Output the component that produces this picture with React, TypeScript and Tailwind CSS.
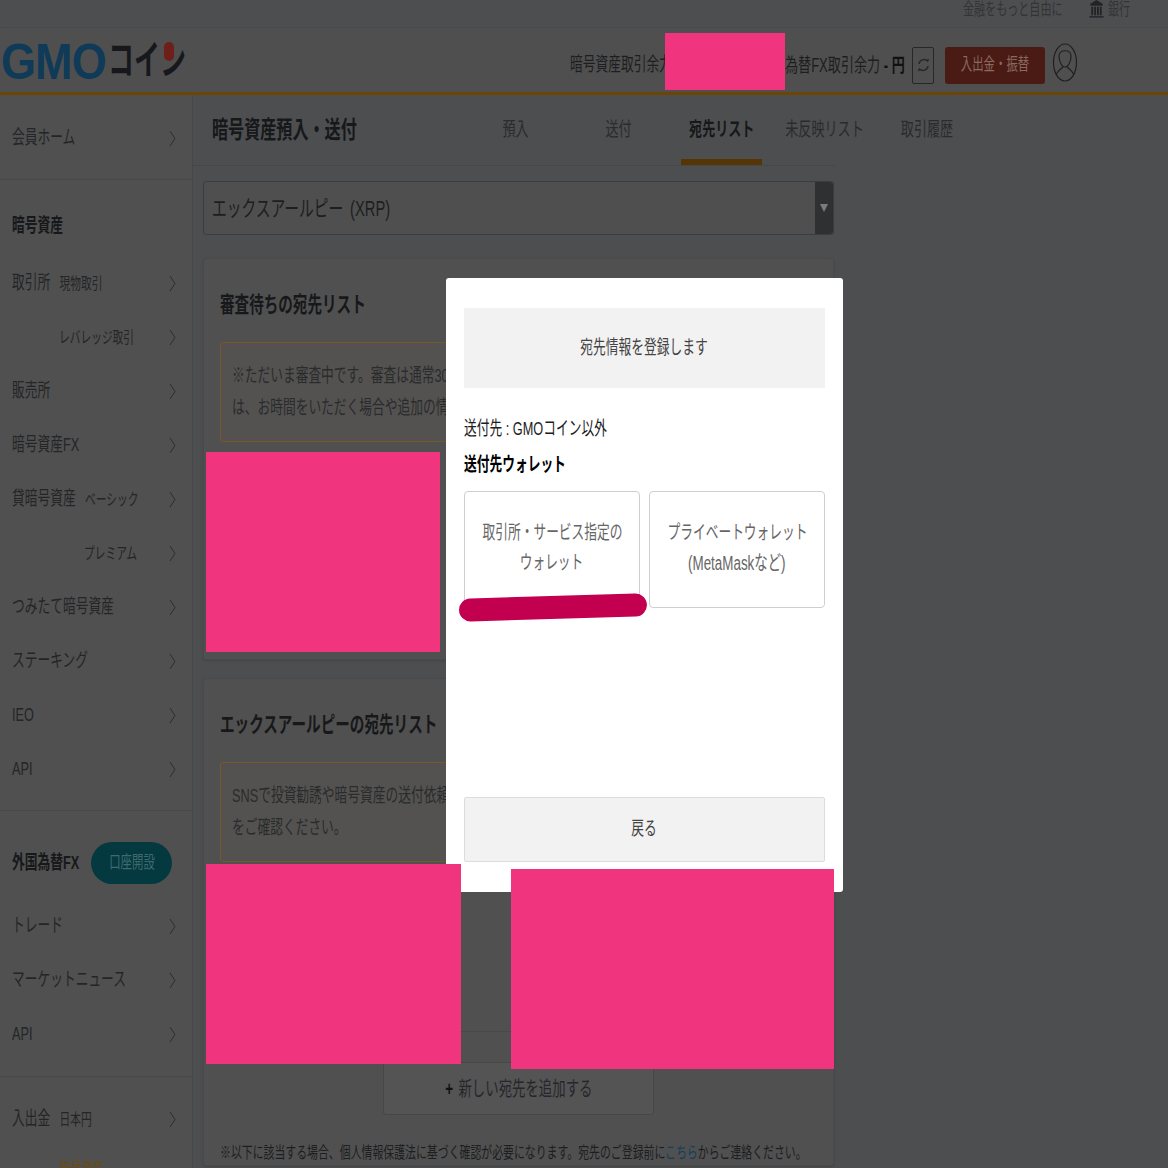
import React from 'react';

const font = 'font-["Liberation_Sans","Noto_Sans_CJK_JP",sans-serif]';

// the screenshot is squeezed horizontally, so text goes through this
const Sq = ({ children, center = false, className = '' }: { children: React.ReactNode; center?: boolean; className?: string }) => (
  <span className={`inline-block shrink-0 whitespace-nowrap scale-x-[0.67] ${center ? 'origin-center' : 'origin-left'} ${className}`}>
    {children}
  </span>
);

const Chevron = () => (
  <svg width="7" height="17" viewBox="0 0 7 17" fill="none" className="shrink-0">
    <path d="M1 1 L6 8.5 L1 16" stroke="#2c2d2f" strokeWidth="1" />
  </svg>
);

const SideRow = ({ label, sub, indent = false, pad = '' }: { label?: string; sub?: string; indent?: boolean; pad?: string }) => (
  <div className={`h-[54px] flex items-center justify-between pl-3 pr-4 ${pad}`}>
    <div className="min-w-0 flex-1">
      <Sq className="text-[19px] text-[#242527]">
        {label}
        {sub && <span className={`text-[16px] ${indent ? '' : 'ml-[14px]'}`}>{sub}</span>}
      </Sq>
    </div>
    <Chevron />
  </div>
);

const Sidebar = () => (
  <aside className="w-[193px] shrink-0 border-r border-[#464749] bg-[#505050] flex flex-col">
    <div className="h-[85px] shrink-0 border-b border-[#484848] pt-[16px]">
      <SideRow label="会員ホーム" />
    </div>
    <div className="h-[631px] shrink-0 border-b border-[#484848]">
      <div className="h-[76px] pl-3 pt-[32px]">
        <Sq className="text-[19px] font-bold text-[#17181a] leading-[28px]">暗号資産</Sq>
      </div>
      <SideRow label="取引所" sub="現物取引" />
      <SideRow sub="レバレッジ取引" indent pad="pl-[59px]" />
      <SideRow label="販売所" />
      <SideRow label="暗号資産FX" />
      <SideRow label="貸暗号資産" sub="ベーシック" />
      <SideRow sub="プレミアム" indent pad="pl-[84px]" />
      <SideRow label="つみたて暗号資産" />
      <SideRow label="ステーキング" />
      <SideRow label="IEO" />
      <SideRow label="API" />
    </div>
    <div className="h-[266px] shrink-0 border-b border-[#484848]">
      <div className="h-[88px] flex items-center pl-3 pt-[16px]">
        <div className="w-[79px] shrink-0">
          <Sq className="text-[19px] font-bold text-[#17181a]">外国為替FX</Sq>
        </div>
        <div className="w-[81px] h-[42px] shrink-0 rounded-[21px] bg-[#04393f] flex items-center justify-center">
          <Sq center className="text-[17px] text-[#3f6b70]">口座開設</Sq>
        </div>
      </div>
      <SideRow label="トレード" />
      <SideRow label="マーケットニュース" />
      <SideRow label="API" />
    </div>
    <div className="pt-[15px]">
      <SideRow label="入出金" sub="日本円" />
      <div className="pl-[60px] pt-[11px]">
        <Sq className="text-[16px] text-[#6a4a10]">暗号資産</Sq>
      </div>
    </div>
  </aside>
);

const Tabs = () => (
  <div className="h-[71px] border-b border-[#46474a] flex items-center">
    <div className="w-[271px] shrink-0 pl-[19px]">
      <Sq className="text-[24px] font-bold text-[#17181a]">暗号資産預入・送付</Sq>
    </div>
    {['預入', '送付', '宛先リスト', '未反映リスト', '取引履歴'].map((t) => (
      <div key={t} className="w-[103px] h-full shrink-0 flex justify-center">
        <div className={`w-[81px] h-full flex items-center justify-center ${t === '宛先リスト' ? 'border-b-[6px] border-[#553504] pt-[6px]' : ''}`}>
          <Sq center className={`text-[19.5px] ${t === '宛先リスト' ? 'font-bold text-[#17181a]' : 'text-[#2a2b2d]'}`}>{t}</Sq>
        </div>
      </div>
    ))}
  </div>
);

const Notice = ({ lines }: { lines: string[] }) => (
  <div className="h-[100px] border border-[#75572a] bg-[#535250] rounded-[2px] px-[11px] flex flex-col justify-center gap-[10px] overflow-hidden">
    {lines.map((l) => (
      <div key={l} className="h-[22px] leading-[22px]">
        <Sq className="text-[19px] text-[#2a2b2d]">{l}</Sq>
      </div>
    ))}
  </div>
);

const Card = ({ title, lines, className = '', children }: { title: string; lines: string[]; className?: string; children?: React.ReactNode }) => (
  <section className={`bg-[#505050] rounded-[3px] border border-[#4a4a4b] px-[16px] pt-[31px] shadow-sm ${className}`}>
    <div className="h-[52px]">
      <Sq className="text-[21.75px] font-bold text-[#17181a] leading-[30px]">{title}</Sq>
    </div>
    <Notice lines={lines} />
    {children}
  </section>
);

const Modal = () => (
  <div className="absolute left-[446px] top-[278px] w-[397px] h-[614px] bg-white rounded-[3px] pt-[30px] px-[18px] pb-[30px] flex flex-col">
    <div className="h-[80px] w-[361px] bg-[#f2f2f2] flex items-center justify-center">
      <Sq center className="text-[19px] text-[#444]">宛先情報を登録します</Sq>
    </div>
    <div className="mt-[27px] h-[28px] leading-[28px]">
      <Sq className="text-[19px] text-[#1c1c1c]">送付先 : GMOコイン以外</Sq>
    </div>
    <div className="mt-[8px] h-[28px] leading-[28px]">
      <Sq className="text-[19px] font-bold text-black">送付先ウォレット</Sq>
    </div>
    <div className="mt-[12px] grid grid-cols-2 gap-[9px] w-[361px]">
      <div className="h-[117px] border border-[#cfcfcf] rounded-[4px] flex flex-col items-center justify-center gap-[8px] pb-[4px]">
        <Sq center className="text-[19px] text-[#666] leading-[22px]">取引所・サービス指定の</Sq>
        <Sq center className="text-[19px] text-[#666] leading-[22px]">ウォレット</Sq>
      </div>
      <div className="h-[117px] border border-[#cfcfcf] rounded-[4px] flex flex-col items-center justify-center gap-[8px] pb-[4px]">
        <Sq center className="text-[19px] text-[#666] leading-[22px]">プライベートウォレット</Sq>
        <Sq center className="text-[20px] text-[#666] leading-[22px]">(MetaMaskなど)</Sq>
      </div>
    </div>
    <div className="mt-auto h-[65px] w-[361px] bg-[#f2f2f2] border border-[#dcdcdc] rounded-[2px] flex items-center justify-center">
      <Sq center className="text-[19px] text-[#444]">戻る</Sq>
    </div>
  </div>
);

export default function App() {
  return (
    <div className={`relative w-[1168px] h-[1168px] overflow-hidden bg-[#4d4e50] ${font}`}>
      {/* top strip */}
      <div className="h-[28px] border-b border-dotted border-[#454648] flex justify-end">
        <div className="w-[205px] shrink-0 flex items-start">
          <div className="w-[126px] shrink-0 leading-[18px]">
            <Sq className="text-[16.5px] text-[#333436]">金融をもっと自由に</Sq>
          </div>
          <svg width="15" height="19" viewBox="0 0 15 20" className="shrink-0" fill="#232427">
            <path d="M7.5 0 L14 4 L14 6 L1 6 L1 4 Z" />
            <path d="M2 7h2v9H2zM5 7h2v9H5zM8 7h2v9H8zM11 7h2v9h-2z" />
            <path d="M0 17h15v1.5H0z" />
          </svg>
          <div className="ml-[4px] leading-[18px]">
            <Sq className="text-[16.5px] text-[#333436]">銀行</Sq>
          </div>
        </div>
      </div>

      {/* header */}
      <header className="h-[67px] border-b-[3px] border-[#6a4506] bg-[#4f4f4f] flex items-center pt-[10px]">
        <div className="relative w-[570px] shrink-0 h-[64px] -mt-[10px] flex items-center pl-[1px] pt-[4px]">
          <span className="inline-block origin-left scale-x-[0.9] text-[50px] leading-none font-bold text-[#0f3a58] tracking-[-1px]">GMO</span>
          <span className="absolute left-[108px] top-[10px] inline-block origin-left scale-x-[0.65] text-[40px] leading-[44px] font-bold text-[#16181c] whitespace-nowrap">コイン</span>
          <span className="absolute left-[164px] top-[14px] w-[10px] h-[19px] rounded-full bg-[#6e1f1a]" />
        </div>
        <div className="w-[215px] shrink-0 pt-[1px]">
          <Sq className="text-[19px] text-[#1d1e20]">暗号資産取引余力</Sq>
        </div>
        <div className="w-[127px] shrink-0 pt-[1px]">
          <Sq className="text-[19.5px] text-[#1d1e20]">為替FX取引余力 <b className="text-[#111]">- 円</b></Sq>
        </div>
        <div className="w-[22px] h-[37px] shrink-0 rounded-[2px] border border-[#26272a] flex items-center justify-center">
          <svg width="13" height="20" viewBox="0 0 13 20" fill="none" stroke="#26272a" strokeWidth="1.4">
            <path d="M2 9 A5 5 0 0 1 10.5 6 L11.5 4" />
            <path d="M11 11 A5 5 0 0 1 2.5 14 L1.5 16" />
          </svg>
        </div>
        <div className="ml-[11px] w-[100px] h-[37px] shrink-0 rounded-[3px] bg-[#4a1a15] flex items-center justify-center">
          <Sq center className="text-[17px] text-[#8a6a5c]">入出金・振替</Sq>
        </div>
        <svg width="26" height="39" viewBox="0 0 26 39" fill="none" stroke="#1f2022" strokeWidth="1.2" className="ml-[7px] shrink-0 -mt-[6px]">
          <ellipse cx="13" cy="19.5" rx="11.5" ry="18.5" />
          <path d="M7 13 C7 6 19 6 19 13 C19 19 16 24 13 24 C10 24 7 19 7 13 Z" />
          <path d="M4 32 C6 27 9 26 11 24 M22 32 C20 27 17 26 15 24" />
        </svg>
      </header>

      <div className="flex h-[1073px]">
        <Sidebar />
        <main className="w-[642px] shrink-0">
          <Tabs />
          <div className="pl-[10px] pr-[1px] pt-[15px]">
            <div className="h-[54px] w-[631px] rounded-[3px] border border-[#3b3c3e] bg-[#4f4f4f] flex items-center justify-between">
              <div className="pl-2">
                <Sq className="text-[22px] text-[#1d1e20]">エックスアールピー <span className="ml-[4px]">(XRP)</span></Sq>
              </div>
              <div className="w-[18px] h-full bg-[#2f3032] rounded-r-[3px] flex items-center justify-center">
                <span className="w-0 h-0 border-x-[4px] border-x-transparent border-t-[8px] border-t-[#7a7b7d]" />
              </div>
            </div>
            <div className="mt-[23px] w-[631px] flex flex-col gap-[18px]">
              <Card
                title="審査待ちの宛先リスト"
                lines={['※ただいま審査中です。審査は通常30分程度で完了します。', 'は、お時間をいただく場合や追加の情報をお願いする場合があります。']}
                className="h-[402px]"
              />
              <Card
                title="エックスアールピーの宛先リスト"
                lines={['SNSで投資勧誘や暗号資産の送付依頼を受けた場合は十分にご注意のうえ', 'をご確認ください。']}
              >
                <div className="mt-[169px] w-[597px] border-t border-[#484848]" />
                <div className="mt-[30px] flex justify-center">
                  <div className="w-[271px] h-[53px] rounded-[3px] border border-[#474747] bg-[#545454] flex items-center justify-center">
                    <Sq center className="text-[20px] text-[#26272a]"><b className="mr-2 text-[#111]">+</b>新しい宛先を追加する</Sq>
                  </div>
                </div>
                <div className="mt-[25px]">
                  <Sq className="text-[16.25px] text-[#1d1e20]">
                    ※以下に該当する場合、個人情報保護法に基づく確認が必要になります。宛先のご登録前に<span className="text-[#123f5c]">こちら</span>からご連絡ください。
                  </Sq>
                </div>
              </Card>
            </div>
          </div>
        </main>
      </div>

      <Modal />

      {/* redactions sit on top of the page */}
      <div className="absolute left-[665px] top-[33px] w-[120px] h-[57px] bg-[#f0347e]" />
      <div className="absolute left-[206px] top-[452px] w-[234px] h-[200px] bg-[#f0347e]" />
      <div className="absolute left-[206px] top-[864px] w-[255px] h-[200px] bg-[#f0347e]" />
      <div className="absolute left-[511px] top-[869px] w-[323px] h-[200px] bg-[#f0347e]" />
      <div className="absolute left-[459px] top-[596px] w-[188px] h-[23px] rounded-full bg-[#c2004f] -rotate-[1.7deg]" />
    </div>
  );
}
